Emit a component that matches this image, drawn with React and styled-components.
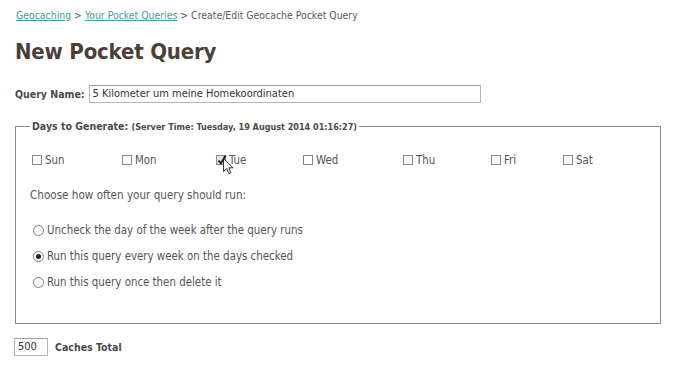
import React from "react";
import styled, { createGlobalStyle } from "styled-components";

const GlobalStyle = createGlobalStyle`
  body {
    margin: 0;
    background: #fff;
    font-family: "DejaVu Sans Condensed", "DejaVu Sans", Verdana, sans-serif;
    color: #505050;
  }
`;

const Page = styled.div`
  position: relative;
  width: 678px;
  height: 366px;
  padding: 9px 15px 0 15px;
  box-sizing: border-box;
  overflow: hidden;
`;

const Crumbs = styled.div`
  font-size: 10.4px;
  color: #5a5a5a;
  padding-left: 1px;
  a {
    color: #3f9d9d;
    text-decoration: underline;
  }
`;

const Title = styled.h1`
  margin: 18px 0 0 0;
  font-size: 22px;
  font-weight: bold;
  color: #4b3f38;
  letter-spacing: -0.2px;
`;

const NameRow = styled.div`
  display: flex;
  align-items: center;
  gap: 4px;
  margin-top: 21px;
`;

const Label = styled.span`
  font-size: 10.5px;
  font-weight: bold;
  color: #4a4a4a;
`;

const TextBox = styled.div`
  width: ${(p) => p.$w}px;
  height: 18px;
  box-sizing: border-box;
  border: 1px solid #b5b5b5;
  border-top-color: #9d9d9d;
  padding: 0 3px;
  font-size: 11px;
  line-height: 16px;
  color: #333;
`;

const Fieldset = styled.fieldset`
  margin: 17px 0 0 0;
  width: 646px;
  height: 204px;
  box-sizing: border-box;
  border: 1px solid #8c8c8c;
  padding: 0 14px;
`;

const Legend = styled.legend`
  padding: 0 2px;
  font-size: 10.5px;
  font-weight: bold;
  color: #4a4a4a;
  small {
    font-size: 9px;
  }
`;

const Days = styled.div`
  display: grid;
  grid-template-columns: 90px 94px 87px 100px 88px 72px auto;
  margin-top: 21px;
  padding-left: 2px;
`;

const Choice = styled.label`
  position: relative;
  display: flex;
  align-items: center;
  gap: 3px;
  font-size: 11.4px;
  color: #555;
`;

const Box = styled.span`
  position: relative;
  width: 10px;
  height: 10px;
  box-sizing: border-box;
  border: 1px solid #8a8a8a;
  background: ${(p) => (p.$checked ? "#dde6ee" : "#fff")};
  svg {
    position: absolute;
    left: 0;
    top: -2px;
  }
`;

const Hint = styled.div`
  margin-top: 21px;
  font-size: 11.6px;
  color: #555;
`;

const Radios = styled.div`
  display: flex;
  flex-direction: column;
  gap: 12px;
  margin-top: 21px;
  padding-left: 3px;
`;

const Dot = styled.span`
  position: relative;
  width: 11px;
  height: 11px;
  box-sizing: border-box;
  border: 1px solid #7d7d7d;
  border-radius: 50%;
  background: #fff;
  &::after {
    content: "";
    display: ${(p) => (p.$on ? "block" : "none")};
    position: absolute;
    left: 2px;
    top: 2px;
    width: 5px;
    height: 5px;
    border-radius: 50%;
    background: #222;
  }
`;

const TotalRow = styled.div`
  display: flex;
  align-items: center;
  gap: 7px;
  margin-top: 14px;
  margin-left: -1px;
`;

const Cursor = styled.svg`
  position: absolute;
  left: 223px;
  top: 158px;
`;

const days = ["Sun", "Mon", "Tue", "Wed", "Thu", "Fri", "Sat"];

const Check = ({ checked }) => (
  <Box $checked={checked}>
    {checked && (
      <svg width="10" height="12" viewBox="0 0 10 12">
        <path d="M1.5 6.5 L4 9.5 L8.5 1.5" fill="none" stroke="#1a1a1a" strokeWidth="1.8" />
      </svg>
    )}
  </Box>
);

export default function App() {
  return (
    <Page>
      <GlobalStyle />
      <Crumbs>
        <a>Geocaching</a> &gt; <a>Your Pocket Queries</a> &gt; Create/Edit Geocache Pocket Query
      </Crumbs>
      <Title>New Pocket Query</Title>
      <NameRow>
        <Label>Query Name:</Label>
        <TextBox $w={392}>5 Kilometer um meine Homekoordinaten</TextBox>
      </NameRow>
      <Fieldset>
        <Legend>
          Days to Generate: <small>(Server Time: Tuesday, 19 August 2014 01:16:27)</small>
        </Legend>
        <Days>
          {days.map((d) => (
            <Choice key={d}>
              <Check checked={d === "Tue"} />
              {d}
            </Choice>
          ))}
        </Days>
        <Hint>Choose how often your query should run:</Hint>
        <Radios>
          <Choice>
            <Dot />
            Uncheck the day of the week after the query runs
          </Choice>
          <Choice>
            <Dot $on />
            Run this query every week on the days checked
          </Choice>
          <Choice>
            <Dot />
            Run this query once then delete it
          </Choice>
        </Radios>
      </Fieldset>
      <TotalRow>
        <TextBox $w={34}>500</TextBox>
        <Label>Caches Total</Label>
      </TotalRow>
      <Cursor width="11" height="17" viewBox="0 0 12 19">
        <path
          d="M0.5 0.5 L0.5 15 L4 11.8 L6.4 17.5 L8.6 16.6 L6.3 11 L11 11 Z"
          fill="#fff"
          stroke="#111"
          strokeWidth="1"
          strokeLinejoin="round"
        />
      </Cursor>
    </Page>
  );
}
